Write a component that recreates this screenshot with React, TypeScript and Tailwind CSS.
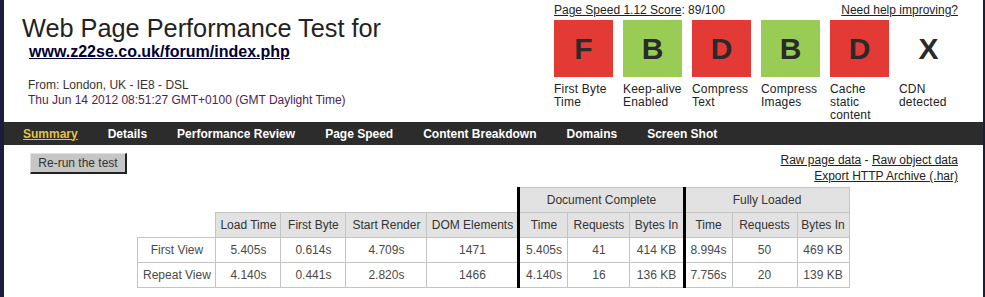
import React from "react";

const grades = [
  { letter: "F", bg: "bg-[#e43a36]", label: ["First Byte", "Time"] },
  { letter: "B", bg: "bg-[#99cc55]", label: ["Keep-alive", "Enabled"] },
  { letter: "D", bg: "bg-[#e43a36]", label: ["Compress", "Text"] },
  { letter: "B", bg: "bg-[#99cc55]", label: ["Compress", "Images"] },
  { letter: "D", bg: "bg-[#e43a36]", label: ["Cache", "static", "content"] },
  { letter: "X", bg: "bg-white", label: ["CDN", "detected"] },
];

const tabs = [
  "Summary",
  "Details",
  "Performance Review",
  "Page Speed",
  "Content Breakdown",
  "Domains",
  "Screen Shot",
];

const rows = [
  {
    name: "First View",
    cells: ["5.405s", "0.614s", "4.709s", "1471"],
    doc: ["5.405s", "41", "414 KB"],
    full: ["8.994s", "50", "469 KB"],
  },
  {
    name: "Repeat View",
    cells: ["4.140s", "0.441s", "2.820s", "1466"],
    doc: ["4.140s", "16", "136 KB"],
    full: ["7.756s", "20", "139 KB"],
  },
];

const th = "border border-[#c4c4c4] bg-[#e2e2e2] font-normal text-[#333] h-[25px] px-0";
const td = "border border-[#c4c4c4] text-[#4a4a4a] h-[25px] px-0 text-center";
const thick = "border-l-[3px] border-l-black";

export default function App() {
  return (
    <div
      className="flex w-[985px] h-[297px] bg-[#1c1c3a] pl-[4px] pr-[2px] overflow-hidden"
      style={{ fontFamily: '"Liberation Sans", Arial, sans-serif' }}
    >
      <div className="flex-1 bg-white flex flex-col">
        <div className="flex h-[122px]">
          <div className="flex-1 pl-[18px] pt-[13px]">
            <h1 className="text-[25.3px] leading-[30px] text-[#222] font-normal">
              Web Page Performance Test for
            </h1>
            <a className="block pl-[7px] text-[16px] leading-[18px] font-bold text-[#000033] underline">
              www.z22se.co.uk/forum/index.php
            </a>
            <div className="pl-[6px] mt-[17px] text-[12px] leading-[15px] text-[#333]">
              From: London, UK - IE8 - DSL
            </div>
            <div className="pl-[6px] text-[12px] leading-[15px] text-[#4e2350]">
              Thu Jun 14 2012 08:51:27 GMT+0100 (GMT Daylight Time)
            </div>
          </div>
          <div className="w-[404px] mr-[25px] pt-[3px]">
            <div className="flex justify-between text-[12px] leading-[14px] text-[#222]">
              <span>
                <span className="underline">Page Speed 1.12 Score</span>: 89/100
              </span>
              <span className="underline">Need help improving?</span>
            </div>
            <div className="flex gap-[10px] mt-[3px]">
              {grades.map((g, i) => (
                <div key={i} className="w-[59px] shrink-0">
                  <div
                    className={`${g.bg} h-[57px] flex items-center justify-center text-[30px] font-bold text-[#2a2a2a]`}
                  >
                    {g.letter}
                  </div>
                  <div className="mt-[6px] text-[12px] leading-[13px] tracking-[0.2px] text-[#222] whitespace-nowrap">
                    {g.label.map((l) => (
                      <div key={l}>{l}</div>
                    ))}
                  </div>
                </div>
              ))}
            </div>
          </div>
        </div>

        <div className="flex items-center h-[23px] bg-[#2c2c2c] pl-[19px] gap-[30px] text-[12px] font-bold">
          {tabs.map((t, i) => (
            <span
              key={t}
              className={i === 0 ? "text-[#e6c343] underline" : "text-white"}
            >
              {t}
            </span>
          ))}
        </div>

        <div className="flex justify-between pl-[26px] pr-[25px] pt-[8px]">
          <button className="h-[21px] w-[97px] bg-[#c6c6c6] text-[12px] text-[#333] border border-t-[#e0e0e0] border-l-[#e0e0e0] border-r-[#222] border-b-[#222] border-r-2 border-b-2">
            Re-run the test
          </button>
          <div className="-mt-[1px] text-[12px] leading-[16px] text-[#222] text-right">
            <div>
              <span className="underline">Raw page data</span> -{" "}
              <span className="underline">Raw object data</span>
            </div>
            <div className="underline">Export HTTP Archive (.har)</div>
          </div>
        </div>

        <div className="flex justify-center mt-[3px]">
          <table className="border-collapse table-fixed text-[12px] w-[711px]">
            <colgroup>
              <col className="w-[78px]" />
              <col className="w-[65px]" />
              <col className="w-[65px]" />
              <col className="w-[81px]" />
              <col className="w-[92px]" />
              <col className="w-[49px]" />
              <col className="w-[62px]" />
              <col className="w-[54px]" />
              <col className="w-[48px]" />
              <col className="w-[65px]" />
              <col className="w-[52px]" />
            </colgroup>
            <thead>
              <tr>
                <th colSpan={5} className="h-[25px]" />
                <th colSpan={3} className={`${th} ${thick}`}>
                  Document Complete
                </th>
                <th colSpan={3} className={`${th} ${thick}`}>
                  Fully Loaded
                </th>
              </tr>
              <tr>
                <th className="h-[25px]" />
                <th className={th}>Load Time</th>
                <th className={th}>First Byte</th>
                <th className={th}>Start Render</th>
                <th className={th}>DOM Elements</th>
                <th className={`${th} ${thick}`}>Time</th>
                <th className={th}>Requests</th>
                <th className={th}>Bytes In</th>
                <th className={`${th} ${thick}`}>Time</th>
                <th className={th}>Requests</th>
                <th className={th}>Bytes In</th>
              </tr>
            </thead>
            <tbody>
              {rows.map((r) => (
                <tr key={r.name}>
                  <td className={td}>{r.name}</td>
                  {r.cells.map((c, i) => (
                    <td key={i} className={td}>
                      {c}
                    </td>
                  ))}
                  {r.doc.map((c, i) => (
                    <td key={i} className={`${td} ${i === 0 ? thick : ""}`}>
                      {c}
                    </td>
                  ))}
                  {r.full.map((c, i) => (
                    <td key={i} className={`${td} ${i === 0 ? thick : ""}`}>
                      {c}
                    </td>
                  ))}
                </tr>
              ))}
            </tbody>
          </table>
        </div>
      </div>
    </div>
  );
}
